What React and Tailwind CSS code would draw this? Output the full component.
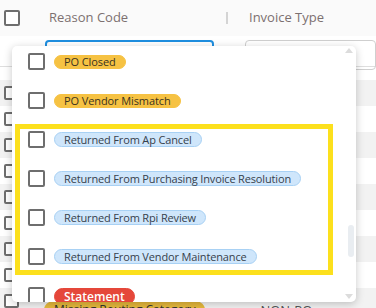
import React from "react";

const Box = ({ size = "w-[17px] h-[17px]" }) => (
  <div className={`${size} border-2 border-[#6e6e6e] rounded-[2px] bg-white shrink-0`} />
);

const items = [
  { t: "PO Closed", k: "y" },
  { t: "PO Vendor Mismatch", k: "y" },
  { t: "Returned From Ap Cancel", k: "b" },
  { t: "Returned From Purchasing Invoice Resolution", k: "b" },
  { t: "Returned From Rpi Review", k: "b" },
  { t: "Returned From Vendor Maintenance", k: "b" },
  { t: "Statement", k: "r" },
];

const pillCls = {
  y: "h-[14px] text-[11px] font-medium tracking-[-0.1px] bg-[#f6c243] text-[#3b3320] border border-[#f6c243]",
  b: "h-[15px] text-[11px] font-medium tracking-[-0.15px] bg-[#cfe6fb] text-[#36414c] border border-[#a8d1f4]",
  r: "h-[17px] text-[12px] font-semibold bg-[#e5473a] text-white border border-[#e5473a] mt-[2px]",
};

export default function App() {
  const rows = Array.from({ length: 9 });
  return (
    <div
      className="relative w-[376px] h-[308px] overflow-hidden bg-white"
      style={{ fontFamily: '"Open Sans", "Noto Sans", sans-serif' }}
    >
      {/* header */}
      <div className="h-[36px] bg-[#fafafa] flex items-center">
        <div className="pl-[4px] w-[49px]">
          <Box size="w-[16px] h-[16px]" />
        </div>
        <div className="w-[177px] text-[13px] text-[#7c7070]">Reason Code</div>
        <div className="w-[2px] h-[12px] bg-[#d4d4d4]" />
        <div className="pl-[21px] text-[13px] text-[#7c7070]">Invoice Type</div>
      </div>
      {/* filter row */}
      <div className="h-[31px] flex items-start pt-[4px] border-b border-[#dedede] bg-white">
        <div className="ml-[45px] w-[169px] h-[30px] border-2 border-[#1f8fe0] rounded-[4px]" />
        <div className="ml-[31px] flex-1 h-[30px] border border-[#cfcfcf] rounded-[4px]" />
      </div>
      <div className="h-[13px]" />
      {rows.map((_, i) => (
        <div
          key={i}
          className={`h-[26px] flex items-center pl-[4px] ${i % 2 === 0 ? "bg-[#f2f2f2]" : "bg-white"}`}
        >
          <Box size="w-[15px] h-[14px]" />
          {i === 8 && (
            <div className="flex items-start self-start pt-[13px]">
              <div className="ml-[25px] h-[18px] px-[10px] rounded-full bg-[#e6b93c] text-[12px] leading-[18px] text-[#333]">
                Missing Routing Category
              </div>
              <div className="ml-[55px] text-[13px] leading-[18px] text-[#555]">NON-PO</div>
            </div>
          )}
        </div>
      ))}

      {/* dropdown */}
      <div className="absolute left-[12px] top-[46px] w-[344px] h-[256px] bg-white rounded-[5px] shadow-[0_2px_8px_rgba(0,0,0,0.22)] overflow-hidden">
        <div className="mt-[-4px] flex flex-col">
          {items.map((it) => (
            <div key={it.t} className="h-[39px] flex items-center pl-[16px] gap-[9px]">
              <Box />
              <div
                className={`px-[9px] rounded-full leading-none flex items-center ${pillCls[it.k]}`}
              >
                {it.t}
              </div>
            </div>
          ))}
        </div>
        {/* scrollbar */}
        <div className="absolute right-[3px] top-[2px] w-0 h-0 border-l-[4px] border-r-[4px] border-b-[5px] border-l-transparent border-r-transparent border-b-[#dcdcdc]" />
        <div className="absolute right-[2px] top-[179px] w-[6px] h-[32px] rounded-full bg-[#e9edf1]" />
        <div className="absolute right-[3px] bottom-[3px] w-0 h-0 border-l-[4px] border-r-[4px] border-t-[5px] border-l-transparent border-r-transparent border-t-[#dcdcdc]" />
      </div>

      {/* highlight annotation */}
      <div className="absolute left-[15px] top-[124px] w-[318px] h-[151px] border-[5px] border-[#fce01d]" />
    </div>
  );
}
